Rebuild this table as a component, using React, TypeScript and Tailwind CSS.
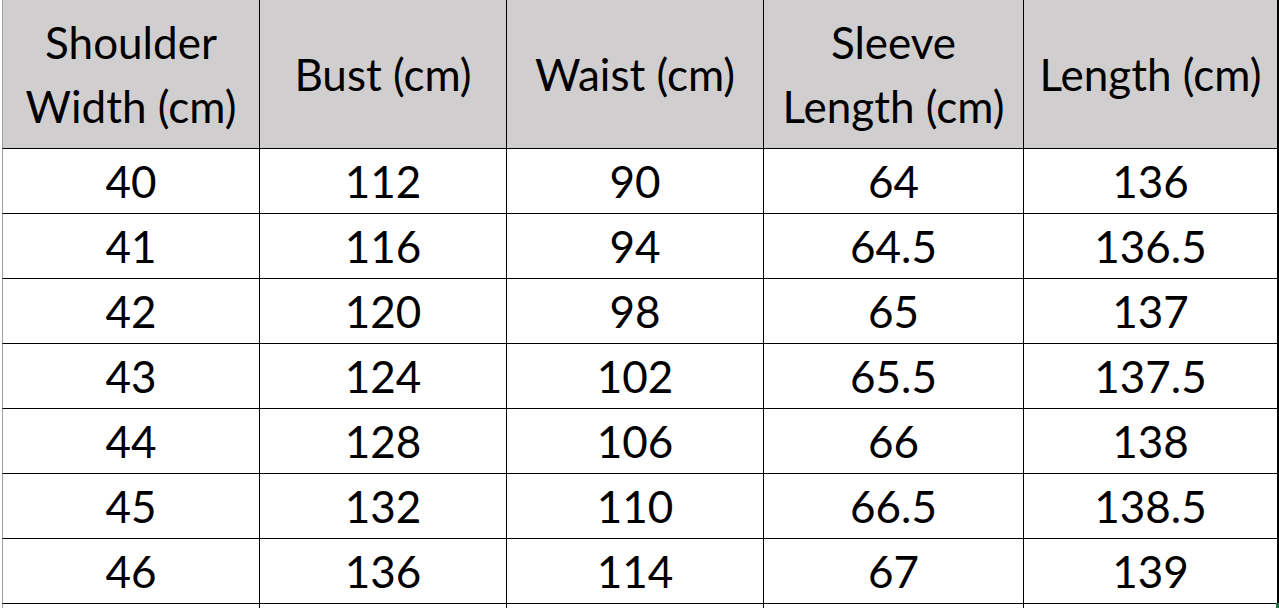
const headers = [
  ["Shoulder", "Width (cm)"],
  ["Bust (cm)"],
  ["Waist (cm)"],
  ["Sleeve", "Length (cm)"],
  ["Length (cm)"],
];

const rows = [
  ["40", "112", "90", "64", "136"],
  ["41", "116", "94", "64.5", "136.5"],
  ["42", "120", "98", "65", "137"],
  ["43", "124", "102", "65.5", "137.5"],
  ["44", "128", "106", "66", "138"],
  ["45", "132", "110", "66.5", "138.5"],
  ["46", "136", "114", "67", "139"],
];

// border classes per column: first has the gray gridline on its left, last a heavier right edge
const colClass = [
  "w-[258px] border-l border-l-[#9e9e9e] border-r border-r-black",
  "w-[247px] border-r border-r-black",
  "w-[257px] border-r border-r-black",
  "w-[260px] border-r border-r-black",
  "w-[255px] border-r-2 border-r-black",
];

export default function App() {
  return (
    <div
      className="relative w-[1279px] h-[608px] overflow-hidden bg-white text-black pl-[2px]"
      style={{ fontFamily: "Lato, 'Open Sans', sans-serif" }}
    >
      {/* header */}
      <div className="flex h-[149px]">
        {headers.map((lines, i) => (
          <div
            key={i}
            className={`${colClass[i]} shrink-0 border-b border-b-black bg-[#d0cece] flex flex-col items-center justify-center text-[44px] leading-[64px]`}
          >
            {lines.map((l) => (
              <span key={l}>{l}</span>
            ))}
          </div>
        ))}
      </div>

      {/* body */}
      {rows.map((row, r) => (
        <div key={r} className="flex h-[65px]">
          {row.map((v, i) => (
            <div
              key={i}
              className={`${colClass[i]} shrink-0 border-b border-b-black flex items-center justify-center text-[44px] leading-none`}
            >
              {v}
            </div>
          ))}
        </div>
      ))}

      {/* next row peeking in */}
      <div className="flex h-[10px]">
        {colClass.map((c, i) => (
          <div key={i} className={`${c} shrink-0`} />
        ))}
      </div>

      <div className="absolute left-[1276px] top-[603px] w-[3px] h-[5px] bg-[#217346]" />
    </div>
  );
}
